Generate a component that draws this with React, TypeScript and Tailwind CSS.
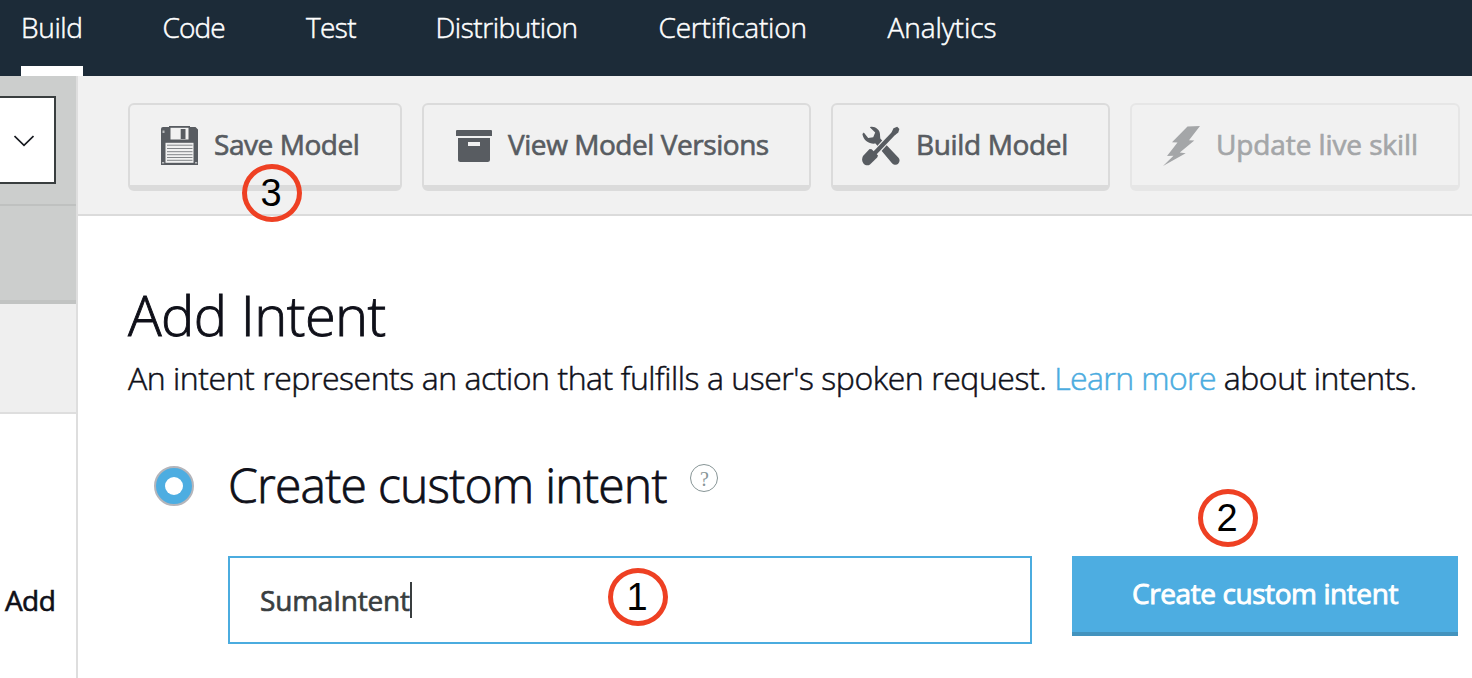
import type { ReactNode } from "react";

const tabs = [
  { label: "Build", box: "w-[62px]", text: "tracking-[-0.35px]", active: true },
  { label: "Code", box: "w-[62px]", text: "-ml-px tracking-[-0.9px]" },
  { label: "Test", box: "w-[50px]", text: "tracking-[-0.6px]" },
  { label: "Distribution", box: "w-[143px]", text: "-ml-px tracking-[-0.45px]" },
  { label: "Certification", box: "w-[149px]", text: "-ml-[1.5px] tracking-[-0.2px]" },
  { label: "Analytics", box: "w-[110px]", text: "-ml-[2px] tracking-[-0.05px]" },
];

function FloppyIcon() {
  return (
    <svg width="38" height="40" viewBox="0 0 38 40" className="block">
      <path d="M0 3Q0 1 2 1H8V0H29V1H34.500L37 3.500V39H0Z" fill="#585c61" />
      <rect x="9.5" y="1.8" width="18" height="11.700" fill="#f1f1f1" />
      <rect x="19.7" y="3" width="4.8" height="10" fill="#585c61" />
      <rect x="4.500" y="16.8" width="28" height="20" fill="#f1f1f1" />
      <path d="M6 19.200H31.5M6 22.500H31.5M6 25.700H31.5M6 28.700H31.5M6 31.500H31.5M6 34.300H31.5" stroke="#76797d" strokeWidth="0.9" />
      <path d="M1.5 4.500h2v2.500h-2zM1 36h2.200v1.5H1zM34 36h2.200v1.5H34z" fill="#b9bbbd" />
    </svg>
  );
}

function ArchiveIcon() {
  return (
    <svg width="36" height="32" viewBox="0 0 36 32" className="block" fill="#585c61">
      <path d="M1 0H35Q36 0 36 1V6H0V1Q0 0 1 0ZM2 8H34V29.500Q34 32 31.500 32H4.500Q2 32 2 29.500ZM12 12V16H24V12Z" fillRule="evenodd" />
    </svg>
  );
}

function ToolsIcon() {
  return (
    <svg width="38" height="40" viewBox="0 0 38 40" className="block">
      <path
        d="M7.800 1.200C12 -0.500 18.500 3.400 18 9L18.300 12.500L36.500 31.700C39.800 35.600 34.800 41.600 30 37.200L13.500 17.500C8.200 18.300 1.500 15.500 0.400 8L1.800 6.600L6.200 11.900L11.200 11.200L13.200 6.500Z"
        fill="#585c61"
      />
      <path d="M11 29.500L31 7.500" stroke="#f1f1f1" strokeWidth="6.400" />
      <path d="M11.500 28.500L32 7" stroke="#585c61" strokeWidth="4.200" />
      <path d="M29.500 6.500L31.500 2.200L35.200 0.700L37.400 3L36.300 6.600L32.800 9.300Z" fill="#585c61" />
      <path d="M7.600 23.100L9.700 23.200L16 29.400L15.200 31.500L8 38.500C3.500 41.500-2 36 1 30Z" fill="#585c61" />
    </svg>
  );
}

function BoltIcon() {
  return (
    <svg width="38" height="40" viewBox="0 0 38 40" className="block" fill="#a4a6a8">
      <path d="M24.500 0.400L37 0L26 14.200L31.300 14.400L16.800 26.500L22.700 27.200L0 40L10.500 29.800L4 30L14.500 16.500L9 16.300Z" />
    </svg>
  );
}

function ToolButton({ icon, label, box, text, disabled }: { icon: ReactNode; label: string; box: string; text: string; disabled?: boolean }) {
  return (
    <button
      className={`flex h-[88px] shrink-0 items-start rounded-[6px] border-2 border-b-[6px] pt-[18px] text-left ${box} ${
        disabled ? "border-[#e6e6e6] text-[#a4a6a8]" : "border-[#dbdbdb] text-[#585c61]"
      }`}
    >
      <span className="mt-[3px] flex h-[40px] w-[38px] shrink-0 items-center justify-center">{icon}</span>
      <span className={`whitespace-nowrap text-[28px] leading-[42px] [-webkit-text-stroke:0.65px_currentColor] ${text}`}>{label}</span>
    </button>
  );
}

function Marker({ n, place }: { n: number; place: string }) {
  return (
    <div className={`absolute ${place} flex h-[58px] w-[60px] items-center justify-center rounded-[50%] border-[5px] border-[#ee4023] pr-[2px]`}>
      <span className="font-['Liberation_Sans',Arial,sans-serif] text-[38px] leading-none text-black">{n}</span>
    </div>
  );
}

export default function App() {
  return (
    <div className="relative flex h-[678px] w-[1472px] flex-col overflow-hidden bg-white font-['Open_Sans',sans-serif] text-[#0f1019]">
      <nav className="flex h-[76px] shrink-0 gap-[80.5px] bg-[#1c2b38] pl-[21px]">
        {tabs.map((t) => (
          <div key={t.label} className={`flex h-full shrink-0 flex-col justify-between ${t.box}`}>
            <span className={`whitespace-nowrap pt-[6px] text-[28px] font-light leading-[42px] text-white [-webkit-text-stroke:0.5px_#fff] ${t.text}`}>{t.label}</span>
            {t.active && <span className="h-[10px] bg-white" />}
          </div>
        ))}
      </nav>
      <div className="flex min-h-0 flex-1">
        <aside className="flex w-[78px] shrink-0 flex-col border-r-2 border-[#dedede]">
          <div className="h-[130px] border-b-2 border-[#bfc1c0] bg-[#cccecd] pt-[20px]">
            <div className="flex h-[88px] w-[56px] items-center justify-end border-2 border-l-0 border-[#393e3f] bg-white pr-[20px]">
              <svg width="20" height="12" viewBox="0 0 20 12" className="mt-[2px]" fill="none" stroke="#16191f" strokeWidth="1.700">
                <path d="M0.500 1L10 10.300L19.500 1" />
              </svg>
            </div>
          </div>
          <div className="h-[98px] border-b-4 border-[#c1c3c2] bg-[#cccecd]" />
          <div className="h-[110px] border-b-2 border-[#dedede] bg-[#efefef]" />
          <div className="pl-[5px] pt-[165px]">
            <span className="text-[28px] leading-[42px] tracking-[-0.6px] [-webkit-text-stroke:0.65px_currentColor]">Add</span>
          </div>
        </aside>
        <main className="flex min-w-0 flex-1 flex-col">
          <div className="flex h-[140px] shrink-0 gap-[20px] border-b-2 border-[#dbdbdb] bg-[#f1f1f1] pl-[50px] pt-[27px]">
            <ToolButton icon={<FloppyIcon />} label="Save Model" box="w-[274px] pl-[31px] gap-[15px]" text="tracking-[-0.45px]" />
            <ToolButton icon={<ArchiveIcon />} label="View Model Versions" box="w-[389px] pl-[31px] gap-[15px]" text="tracking-[-0.45px]" />
            <ToolButton icon={<ToolsIcon />} label="Build Model" box="w-[279px] pl-[29px] gap-[16px]" text="tracking-[-0.35px]" />
            <ToolButton icon={<BoltIcon />} label="Update live skill" box="w-[330px] pl-[31px] gap-[15px]" text="tracking-[-0.1px]" disabled />
          </div>
          <h1 className="ml-[50px] mt-[60px] whitespace-nowrap text-[56px] font-light leading-[76px] tracking-[-0.55px] [-webkit-text-stroke:0.9px_currentColor]">Add Intent</h1>
          <p className="ml-[50px] mt-[4px] whitespace-nowrap text-[32px] font-light leading-[44px] tracking-[-0.45px] [-webkit-text-stroke:0.5px_currentColor]">
            An intent represents an action that fulfills a user's spoken request. <a className="tracking-[-0.6px] text-[#4bacdf]">Learn more</a> about intents.
          </p>
          <div className="ml-[76px] mt-[53px] flex h-[64px] items-center">
            <span className="mt-[2px] flex size-[40px] items-center justify-center rounded-full border-2 border-[#b4b5bb] bg-[#4dade1]">
              <span className="size-[18px] rounded-full bg-white" />
            </span>
            <h2 className="ml-[34px] w-[462px] whitespace-nowrap text-[48px] font-light leading-[64px] tracking-[-0.75px] [-webkit-text-stroke:0.8px_currentColor]">Create custom intent</h2>
            <span className="mb-[14px] flex size-[28px] items-center justify-center rounded-full border-[1.500px] border-[#879596] pl-px pt-[2px] font-['Liberation_Serif',serif] text-[20px] leading-none text-[#879596]">?</span>
          </div>
          <div className="ml-[150px] mt-[39px] flex items-start gap-[40px]">
            <div className="flex h-[88px] w-[804px] items-center border-2 border-[#4bacdf] pl-[30px]">
              <span className="text-[28px] leading-[42px] tracking-[-0.2px] text-[#393e3f] [-webkit-text-stroke:0.65px_currentColor]">SumaIntent</span>
              <span className="h-[36px] w-[2px] bg-[#393e3f]" />
            </div>
            <button className="flex h-[80px] w-[386px] items-center justify-center whitespace-nowrap border-b-4 border-[#4393be] bg-[#4dade1] pb-[2px] text-[28px] tracking-[-0.42px] text-white [-webkit-text-stroke:0.9px_currentColor]">Create custom intent</button>
          </div>
        </main>
      </div>
      <Marker n={3} place="left-[242px] top-[164px]" />
      <Marker n={1} place="left-[608px] top-[568px]" />
      <Marker n={2} place="left-[1198px] top-[489px]" />
    </div>
  );
}
